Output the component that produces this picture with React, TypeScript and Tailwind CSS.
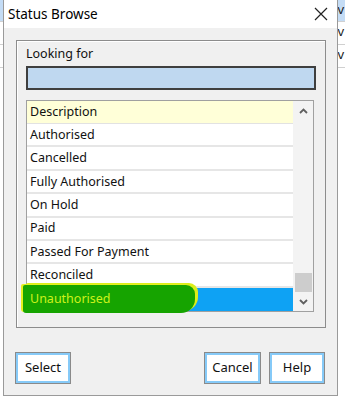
import { ReactNode } from 'react';

const rows = [
  'Authorised',
  'Cancelled',
  'Fully Authorised',
  'On Hold',
  'Paid',
  'Passed For Payment',
  'Reconciled',
];

function Chevron({ up }: { up?: boolean }) {
  return (
    <svg width="9" height="6" viewBox="0 0 9 6" className="text-[#606060]">
      <polyline
        points={up ? '1,5 4.5,1.5 8,5' : '1,1 4.5,4.5 8,1'}
        fill="none"
        stroke="currentColor"
        strokeWidth="1.8"
      />
    </svg>
  );
}

function DialogButton({ children, className }: { children: ReactNode; className?: string }) {
  return (
    <button
      className={`h-[32px] bg-white border border-[#8a8a8a] shadow-[inset_0_0_0_2px_#86caf8] text-[13px] text-[#111] ${className ?? ''}`}
    >
      {children}
    </button>
  );
}

export default function App() {
  return (
    <div
      className="relative w-[345px] h-[400px] overflow-hidden bg-white"
      style={{ fontFamily: '"Noto Sans", "Open Sans", sans-serif' }}
    >
      {/* window behind the dialog */}
      <div className="flex flex-col text-[13px] text-[#222]">
        <div className="h-[22px] bg-[#c4dcf5] border-b border-[#d0d0d0] flex justify-end pr-[1px]">v</div>
        <div className="h-[23px] border-b border-[#d0d0d0] flex justify-end pr-[1px]">v</div>
        <div className="h-[23px] border-b border-[#d0d0d0] flex justify-end pr-[1px]">v</div>
      </div>

      {/* dialog */}
      <div className="absolute left-[3px] top-0 w-[335px] h-[396px] flex flex-col border-x border-b border-[#9a9a9a] bg-[#f0f0f0]">
        <div className="h-[28px] bg-white flex items-center justify-between pl-[4px] pr-[9px] shrink-0">
          <span className="text-[13.5px] text-[#000]">Status Browse</span>
          <svg width="14" height="14" viewBox="0 0 14 14">
            <path d="M1 1L13 13M13 1L1 13" stroke="#222" strokeWidth="1.2" />
          </svg>
        </div>

        <div className="mt-[12px] ml-[12px] w-[310px] h-[288px] border border-[#8c8c8c] shadow-[inset_1px_1px_0_#ffffff] px-[9px] pt-[4px] flex flex-col">
          <div className="text-[12.5px] leading-[18px] text-[#111]">Looking for</div>
          <div className="mt-[3px] w-[290px] h-[24px] bg-[#bfd8f0] border-2 border-[#3f3f3f]" />

          <div className="mt-[10px] w-[288px] h-[212px] border border-[#a0a0a0] bg-white flex">
            <div className="w-[266px] flex flex-col text-[12.5px] text-[#111]">
              <div className="h-[23px] bg-[#ffffd8] border-b border-[#e2e2e2] flex items-center pl-[3px] pt-[1px] shrink-0">
                Description
              </div>
              {rows.map((r) => (
                <div
                  key={r}
                  className="h-[23.4px] border-b-2 border-[#e6e6e6] flex items-center pl-[3px] pt-[1px] shrink-0"
                >
                  {r}
                </div>
              ))}
              <div className="relative flex-1 bg-[#0ea2f4] flex items-center pl-[3px] pt-[1px]">
                <span className="absolute left-[-4px] top-[-3px] w-[172px] h-[28px] bg-[#16a400] rounded-[2px_9px_14px_3px] shadow-[-2px_-1px_0_#e4f020,3px_-2px_0_#dcee1a]" />
                <span className="relative text-[#cdf21c]">Unauthorised</span>
              </div>
            </div>
            <div className="flex-1 bg-[#f3f3f3] flex flex-col">
              <div className="h-[20px] flex items-center justify-center">
                <Chevron up />
              </div>
              <div className="flex-1 flex flex-col justify-end items-center">
                <div className="w-[17px] h-[19px] bg-[#cdcdcd]" />
              </div>
              <div className="h-[19px] flex items-center justify-center">
                <Chevron />
              </div>
            </div>
          </div>
        </div>

        <div className="mt-[24px] flex pl-[11px] pr-[12px]">
          <DialogButton className="w-[56px]">Select</DialogButton>
          <div className="flex-1" />
          <DialogButton className="w-[57px]">Cancel</DialogButton>
          <DialogButton className="w-[56px] ml-[8px]">Help</DialogButton>
        </div>
      </div>
    </div>
  );
}
